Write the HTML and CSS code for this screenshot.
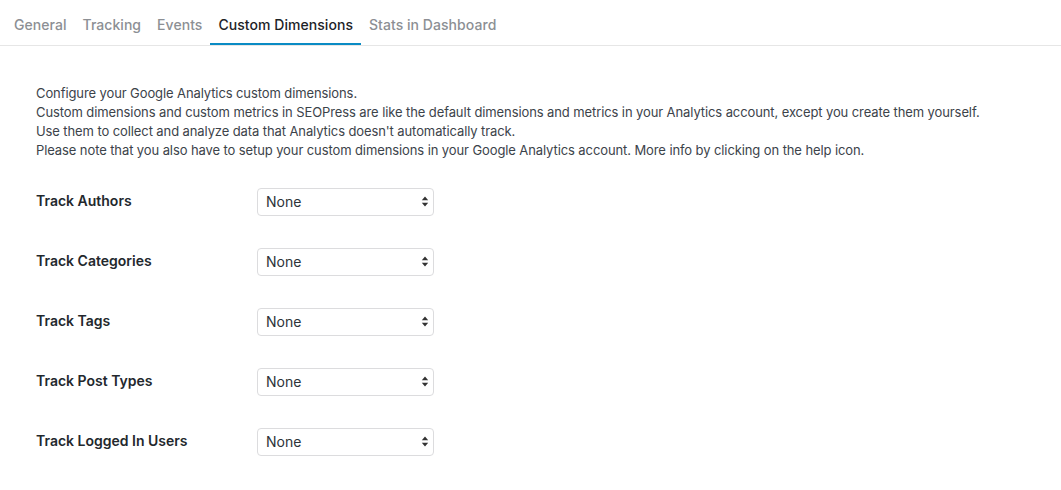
FILE: index.html
```html
<!DOCTYPE html>
<html>
<head>
<meta charset="utf-8">
<link rel="stylesheet" href="styles.css">
</head>
<body>
<nav class="tabs">
  <a class="tab">General</a>
  <a class="tab">Tracking</a>
  <a class="tab">Events</a>
  <a class="tab active">Custom Dimensions</a>
  <a class="tab">Stats in Dashboard</a>
</nav>
<main class="content">
  <div class="intro">
    <p>Configure your Google Analytics custom dimensions.</p>
    <p>Custom dimensions and custom metrics in SEOPress are like the default dimensions and metrics in your Analytics account, except you create them yourself.</p>
    <p>Use them to collect and analyze data that Analytics doesn't automatically track.</p>
    <p>Please note that you also have to setup your custom dimensions in your Google Analytics account. More info by clicking on the help icon.</p>
  </div>
  <div class="form">
    <div class="row"><label class="label">Track Authors</label><span class="select-wrap"><select class="select"><option>None</option></select><svg class="arrows" width="8" height="11" viewBox="0 0 8 11"><path d="M4 0.5 L7.2 4.3 H0.8 Z M4 10.5 L7.2 6.7 H0.8 Z" fill="#333"/></svg></span></div>
    <div class="row"><label class="label">Track Categories</label><span class="select-wrap"><select class="select"><option>None</option></select><svg class="arrows" width="8" height="11" viewBox="0 0 8 11"><path d="M4 0.5 L7.2 4.3 H0.8 Z M4 10.5 L7.2 6.7 H0.8 Z" fill="#333"/></svg></span></div>
    <div class="row"><label class="label">Track Tags</label><span class="select-wrap"><select class="select"><option>None</option></select><svg class="arrows" width="8" height="11" viewBox="0 0 8 11"><path d="M4 0.5 L7.2 4.3 H0.8 Z M4 10.5 L7.2 6.7 H0.8 Z" fill="#333"/></svg></span></div>
    <div class="row"><label class="label">Track Post Types</label><span class="select-wrap"><select class="select"><option>None</option></select><svg class="arrows" width="8" height="11" viewBox="0 0 8 11"><path d="M4 0.5 L7.2 4.3 H0.8 Z M4 10.5 L7.2 6.7 H0.8 Z" fill="#333"/></svg></span></div>
    <div class="row"><label class="label">Track Logged In Users</label><span class="select-wrap"><select class="select"><option>None</option></select><svg class="arrows" width="8" height="11" viewBox="0 0 8 11"><path d="M4 0.5 L7.2 4.3 H0.8 Z M4 10.5 L7.2 6.7 H0.8 Z" fill="#333"/></svg></span></div>
  </div>
</main>
</body>
</html>
```
FILE: styles.css
```css
html, body {
  margin: 0;
  padding: 0;
  background: #fff;
  font-family: Inter, "Noto Sans", "Liberation Sans", sans-serif;
  color: #3c434a;
}
.tabs {
  display: flex;
  padding-left: 6px;
  border-bottom: 1px solid #e6e6e6;
  height: 46px;
  box-sizing: border-box;
}
.tab {
  display: flex;
  align-items: center;
  padding: 6px 8px 0;
  font-size: 14px;
  font-weight: 500;
  letter-spacing: 0.05px;
  color: #8c8f94;
  border-bottom: 2px solid transparent;
  cursor: pointer;
}
.tab.active {
  color: #1d2327;
  border-bottom-color: #0a8bc4;
}
.content {
  padding: 38px 36px 0;
}
.intro p {
  margin: 0;
  font-size: 13px;
  line-height: 19px;
  letter-spacing: -0.1px;
  color: #3c434a;
}
.form {
  padding-top: 10px;
}
.row {
  display: flex;
  align-items: center;
  height: 60px;
}
.label {
  width: 221px;
  font-size: 14px;
  font-weight: 600;
  color: #23282d;
}
.select-wrap {
  position: relative;
  display: inline-block;
  margin-top: 3px;
}
.select {
  display: block;
  appearance: none;
  -webkit-appearance: none;
  width: 177px;
  height: 28px;
  box-sizing: border-box;
  border: 1px solid #dcdcde;
  border-radius: 4px;
  background: #fff;
  padding: 0 20px 0 8px;
  font-family: inherit;
  font-size: 14px;
  color: #2c3338;
}
.arrows {
  position: absolute;
  right: 5px;
  top: 8px;
  pointer-events: none;
}
```
